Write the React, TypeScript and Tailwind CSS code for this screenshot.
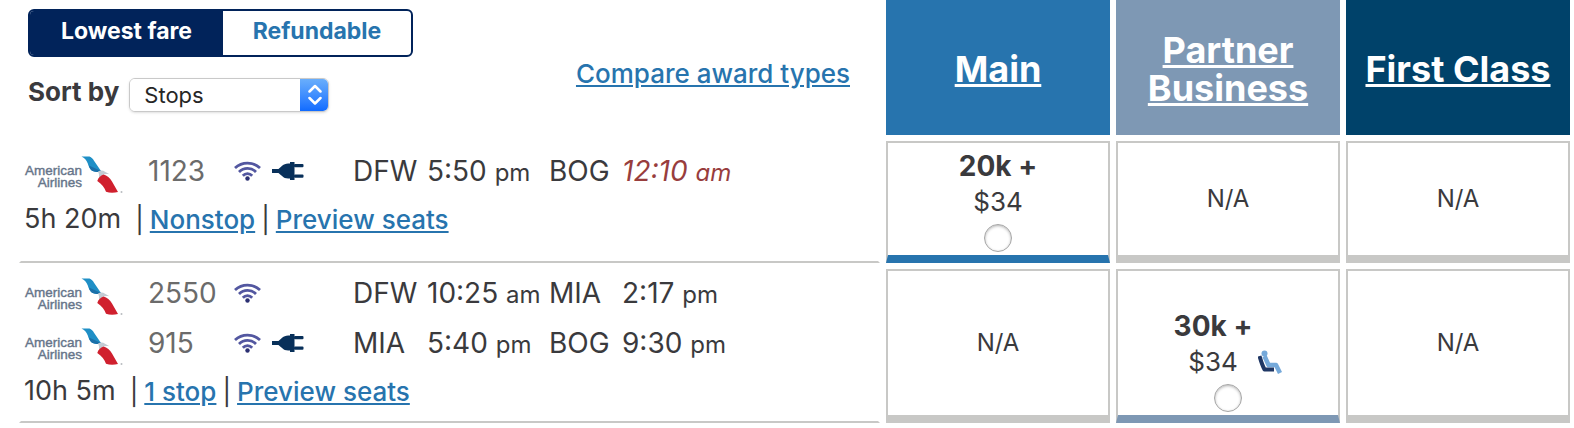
import React from 'react';

interface Leg {
  flight: string;
  power: boolean;
  from: string;
  departs: string;
  to: string;
  arrives: string;
  nextDay?: boolean;
}

interface Fare {
  points: string;
  tax: string;
  lieFlat?: boolean;
}

interface Itinerary {
  id: string;
  legs: Leg[];
  duration: string;
  stops: string;
  cellClass: string;
  fares: (Fare | null)[];
}

const cabins = [
  { name: 'Main', bg: 'bg-[#2774ae]', accent: 'border-b-[#2774ae]' },
  { name: 'Partner Business', bg: 'bg-[#7e98b4]', accent: 'border-b-[#7e98b4]' },
  { name: 'First Class', bg: 'bg-[#00426a]', accent: 'border-b-[#00426a]' },
];

const itineraries: Itinerary[] = [
  {
    id: 'nonstop',
    legs: [{ flight: '1123', power: true, from: 'DFW', departs: '5:50 pm', to: 'BOG', arrives: '12:10 am', nextDay: true }],
    duration: '5h 20m',
    stops: 'Nonstop',
    cellClass: 'pt-[10px]',
    fares: [{ points: '20k', tax: '$34' }, null, null],
  },
  {
    id: 'one-stop',
    legs: [
      { flight: '2550', power: false, from: 'DFW', departs: '10:25 am', to: 'MIA', arrives: '2:17 pm' },
      { flight: '915', power: true, from: 'MIA', departs: '5:40 pm', to: 'BOG', arrives: '9:30 pm' },
    ],
    duration: '10h 5m',
    stops: '1 stop',
    cellClass: 'pt-1 pb-3',
    fares: [null, { points: '30k', tax: '$34', lieFlat: true }, null],
  },
];

const AirlineLogo = () => (
  <svg width="100" height="39" viewBox="0 0 100 39" role="img" aria-label="American Airlines" className="mt-[7px]">
    <g fontFamily="'Liberation Sans', sans-serif" fontSize="13.5" fill="#66758a" stroke="#66758a" strokeWidth="0.4" textAnchor="end">
      <text x="58" y="19.500">American</text>
      <text x="58" y="31.500">Airlines</text>
    </g>
    <path d="M57.500 1.500h8c2 .8 3.400 2.200 4.500 4.200l7 10.300c-3 1.400-6.500 1.200-9-.2-2.500-1.800-3.200-4.300-4.200-7.300C62.600 5.300 60.500 3 57.500 1.500z" fill="#1f8fc6" />
    <path d="M65 10.500l12 5.500c-3 1.400-6.500 1.200-9-.2-1.500-1.200-2.400-3-3-5.300z" fill="#1b6fa8" />
    <path d="M74 16.500c3-1.500 5-1 7 .2l4.500 2.600c-3-.6-5-.3-6.500.5-1.500.8-2.700 1.900-4 3.200.3-2.500 0-4.500-1-6.500z" fill="#c3ccd4" />
    <path d="M79.500 19.500c3.500.8 6.500 3.500 8.500 7l6 10.500c-4 .9-8.500.9-12-.2-1.500-4.500-4-7.500-8.700-10.800.7-3 3.200-5.500 6.200-6.500z" fill="#d0202e" />
    <circle cx="97.500" cy="37" r="1" fill="#b9bcc0" />
  </svg>
);

const WifiIcon = () => (
  <svg width="27" height="20" viewBox="0 0 27 20" role="img" aria-label="Wi-Fi" fill="none" stroke="#5357a0" strokeWidth="2.800">
    <path d="M1 7C8 .4 19 .4 26 7" />
    <path d="M5 11c4.800-4.800 12.200-4.800 17 0" />
    <path d="M8.800 14.800c2.700-2.800 6.700-2.800 9.400 0" />
    <circle cx="13.500" cy="17.500" r="2.200" fill="#2b2f72" stroke="none" />
  </svg>
);

const PlugIcon = () => (
  <svg width="32" height="20" viewBox="0 0 32 20" role="img" aria-label="Power outlet" fill="#08305a">
    <path d="M0 8h6.500c1.500-1 3-2.800 5-4.200C13 2.800 15.500 2.500 18 2.500V1h4.500v18H18v-1.500c-2.500 0-5-.3-6.500-1.300-2-1.400-3.500-3.200-5-4.200H0z" />
    <rect x="22" y="3" width="9.500" height="3.200" rx="1" />
    <rect x="22" y="13.500" width="9.500" height="3.200" rx="1" />
  </svg>
);

const SeatIcon = () => (
  <svg width="24" height="24" viewBox="0 0 24 24" role="img" aria-label="Lie-flat seat" fill="none" strokeLinejoin="round">
    <path d="M6.500 6l4 9h7.500l4 8" stroke="#75a9da" strokeWidth="4.500" />
    <path d="M1.500 6c1.500 5 2.500 9 5 13.500h9.500" stroke="#1f3764" strokeWidth="4" />
    <circle cx="6.500" cy="3.500" r="3" fill="#75a9da" />
  </svg>
);

const Time: React.FC<{ value: string; className?: string }> = ({ value, className }) => {
  const [clock, period] = value.split(' ');
  return (
    <span className={className}>
      {clock} <span className="text-2xl">{period}</span>
    </span>
  );
};

const LegRow: React.FC<{ leg: Leg }> = ({ leg }) => (
  <div className="grid grid-cols-[124px_86px_119px_74px_122px_73px_auto] grid-rows-[40px] items-center whitespace-nowrap">
    <AirlineLogo />
    <span className="text-[#6b6b6b]">{leg.flight}</span>
    <span className="flex items-center gap-[11px]">
      <WifiIcon />
      {leg.power && <PlugIcon />}
    </span>
    <span>{leg.from}</span>
    <Time value={leg.departs} />
    <span>{leg.to}</span>
    <Time value={leg.arrives} className={leg.nextDay ? 'text-[#983d3d] italic' : ''} />
  </div>
);

const FareCell: React.FC<{ fare: Fare | null; accent: string; cabin: string }> = ({ fare, accent, cabin }) => {
  if (!fare) {
    return (
      <td className="border-2 border-b-8 border-[#c8c8c6] text-center align-middle text-2xl">N/A</td>
    );
  }

  return (
    <td className={`border-2 border-b-8 border-[#c8c8c6] pt-[5px] pb-[3px] align-bottom ${accent}`}>
      <label className="flex flex-col items-center gap-1">
        <span className="flex items-end justify-center gap-1.5">
          <span className="flex flex-col text-center leading-9">
            <span className="text-[28px] leading-9 font-bold">{fare.points} +</span>
            <span className="text-[26px] leading-9">{fare.tax}</span>
          </span>
          {fare.lieFlat && <span className="pb-1.5"><SeatIcon /></span>}
        </span>
        <input
          type="radio"
          name="fare"
          aria-label={`${cabin} ${fare.points} + ${fare.tax}`}
          className="size-7 appearance-none rounded-full border border-[#a6a6a6] bg-white shadow-[inset_0_1px_3px_rgba(0,0,0,0.3)]"
        />
      </label>
    </td>
  );
};

const App: React.FC = () => {
  return (
    <main className="overflow-hidden bg-white pl-[13px] font-[Inter,sans-serif] text-[#3a3a3d]">
      <table className="-mt-1.5 w-[calc(100%+2px)] table-fixed border-separate border-spacing-[6px]">
        <colgroup>
          <col />
          <col className="w-[224px]" />
          <col className="w-[224px]" />
          <col className="w-[224px]" />
        </colgroup>
        <thead>
          <tr>
            <td className="h-[135px] pt-[9px] pr-[30px] pl-[9px] align-top">
              <div className="flex justify-between">
                <div>
                  <div className="flex h-12 w-[385px] overflow-hidden rounded-md border-2 border-[#01235a] text-[23px] font-bold">
                    <button type="button" className="w-[193px] bg-[#01235a] pb-1 text-white">Lowest fare</button>
                    <button type="button" className="flex-1 pb-1 text-[#2774ae]">Refundable</button>
                  </div>
                  <div className="mt-[21px] flex items-center gap-2.5">
                    <label htmlFor="sort" className="pb-1.5 text-[26px] leading-7 font-bold">Sort by</label>
                    <div className="relative h-[34px] w-[200px] overflow-hidden rounded-md border border-[#c9c9c9] shadow-sm">
                      <select id="sort" className="h-full w-full appearance-none bg-white pl-3.5 text-[22px] leading-8 text-[#262626]">
                        <option>Stops</option>
                      </select>
                      <span className="pointer-events-none absolute -top-px -right-px flex h-[34px] w-[29px] items-center justify-center bg-linear-to-b from-[#6cb0fb] to-[#0a68ff]">
                        <svg width="14" height="22" viewBox="0 0 14 22" fill="none" stroke="white" strokeWidth="2.500" strokeLinecap="round" strokeLinejoin="round">
                          <path d="M1.500 7.500L7 2l5.500 5.500M1.500 14L7 19.500 12.500 14" />
                        </svg>
                      </span>
                    </div>
                  </div>
                </div>
                <a href="#award-types" className="mt-[47px] text-[26px] leading-9 font-medium text-[#2774ae] underline">Compare award types</a>
              </div>
            </td>
            {cabins.map((cabin) => (
              <th key={cabin.name} scope="col" className={`px-4 pt-0.5 align-middle text-[36px] leading-[38px] font-bold text-white ${cabin.bg}`}>
                <a href="#cabin" className="underline">{cabin.name}</a>
              </th>
            ))}
          </tr>
        </thead>
        <tbody>
          {itineraries.map((trip) => (
            <tr key={trip.id}>
              <td className={`border-x-2 border-b-2 border-x-transparent border-b-[#c8c8c6] pl-[3px] align-top text-[28px] ${trip.cellClass}`}>
                <div className="flex flex-col gap-2.5">
                  {trip.legs.map((leg) => (
                    <LegRow key={leg.flight} leg={leg} />
                  ))}
                  <div className="flex h-9 items-center gap-1.5 text-[26px] whitespace-nowrap">
                    <span className="pr-2 text-[27px]">{trip.duration}</span>
                    <span>|</span>
                    <a href="#stops" className="font-medium text-[#2774ae] underline">{trip.stops}</a>
                    <span>|</span>
                    <a href="#seats" className="font-medium text-[#2774ae] underline">Preview seats</a>
                  </div>
                </div>
              </td>
              {trip.fares.map((fare, i) => (
                <FareCell key={cabins[i].name} fare={fare} accent={cabins[i].accent} cabin={cabins[i].name} />
              ))}
            </tr>
          ))}
        </tbody>
      </table>
    </main>
  );
};

export default App;
